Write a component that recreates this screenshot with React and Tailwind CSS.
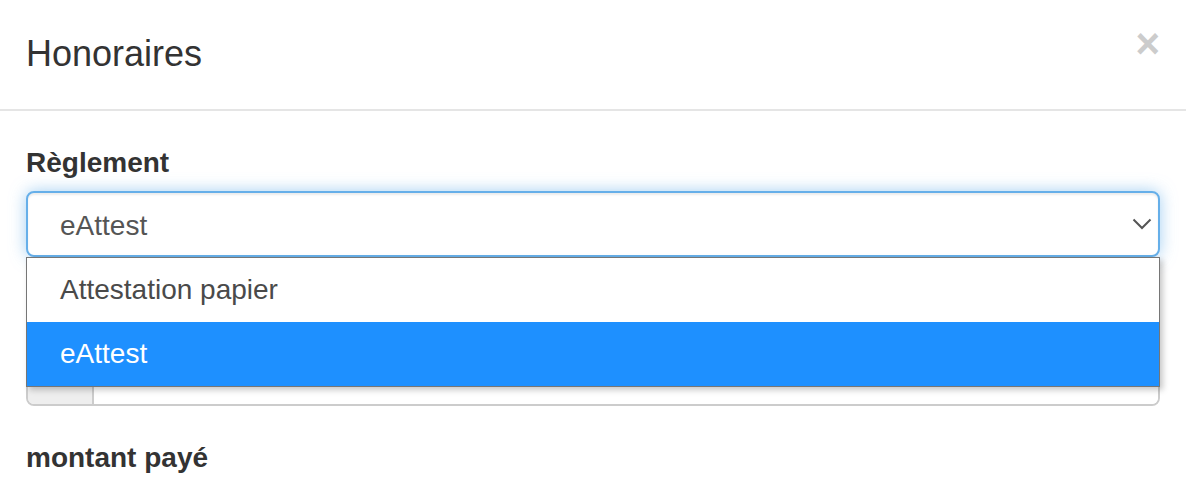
import React from "react";

export default function App() {
  return (
    <div
      className="w-[1186px] h-[481px] overflow-hidden bg-white"
      style={{ fontFamily: '"Liberation Sans", Arial, sans-serif' }}
    >
      {/* Header */}
      <div className="h-[111px] box-border border-b-2 border-[#e5e5e5] px-[26px] pt-[28px] flex items-start justify-between">
        <h4 className="text-[36px] leading-[52px] text-[#333] font-normal">Honoraires</h4>
        <button className="-mt-[5px] text-[42px] leading-none font-bold text-[#cccccc] bg-transparent">
          ×
        </button>
      </div>

      {/* Body */}
      <div className="px-[26px] pt-[32px]">
        <label className="block text-[28px] leading-[40px] font-bold text-[#333]">Règlement</label>
        <div className="relative mt-[8px]">
          <div className="h-[66px] box-border border-2 border-[#66afe9] rounded-[8px] shadow-[inset_0_2px_2px_rgba(0,0,0,0.075),0_0_16px_rgba(102,175,233,0.6)] flex items-center justify-between pl-[32px] pr-[6px] pt-[3px] bg-white">
            <span className="text-[28px] text-[#555]">eAttest</span>
            <svg width="20" height="12" viewBox="0 0 20 12" fill="none" className="-mt-[3px]">
              <path d="M1.5 1.5 L10 10 L18.5 1.5" stroke="#555" strokeWidth="2" />
            </svg>
          </div>
          <div className="absolute left-0 right-0 top-full z-10 border border-[#767676] bg-white shadow-[3px_3px_6px_rgba(0,0,0,0.22)]">
            <div className="h-[64px] flex items-center pl-[33px] text-[28px] text-[#4a4a4a]">
              Attestation papier
            </div>
            <div className="h-[64px] flex items-center pl-[33px] text-[28px] text-white bg-[#1e90ff]">
              eAttest
            </div>
          </div>
        </div>

        <div className="mt-[28px] h-[40px]"></div>
        <div className="mt-[13px] h-[68px] box-border flex border-2 border-[#cccccc] rounded-[8px] shadow-[inset_0_2px_2px_rgba(0,0,0,0.075)] overflow-hidden">
          <div className="w-[66px] bg-[#eeeeee] border-r-2 border-[#cccccc]"></div>
          <div className="flex-1 bg-white"></div>
        </div>

        <label className="block mt-[32px] text-[28px] leading-[40px] font-bold text-[#333]">montant payé</label>
      </div>
    </div>
  );
}
